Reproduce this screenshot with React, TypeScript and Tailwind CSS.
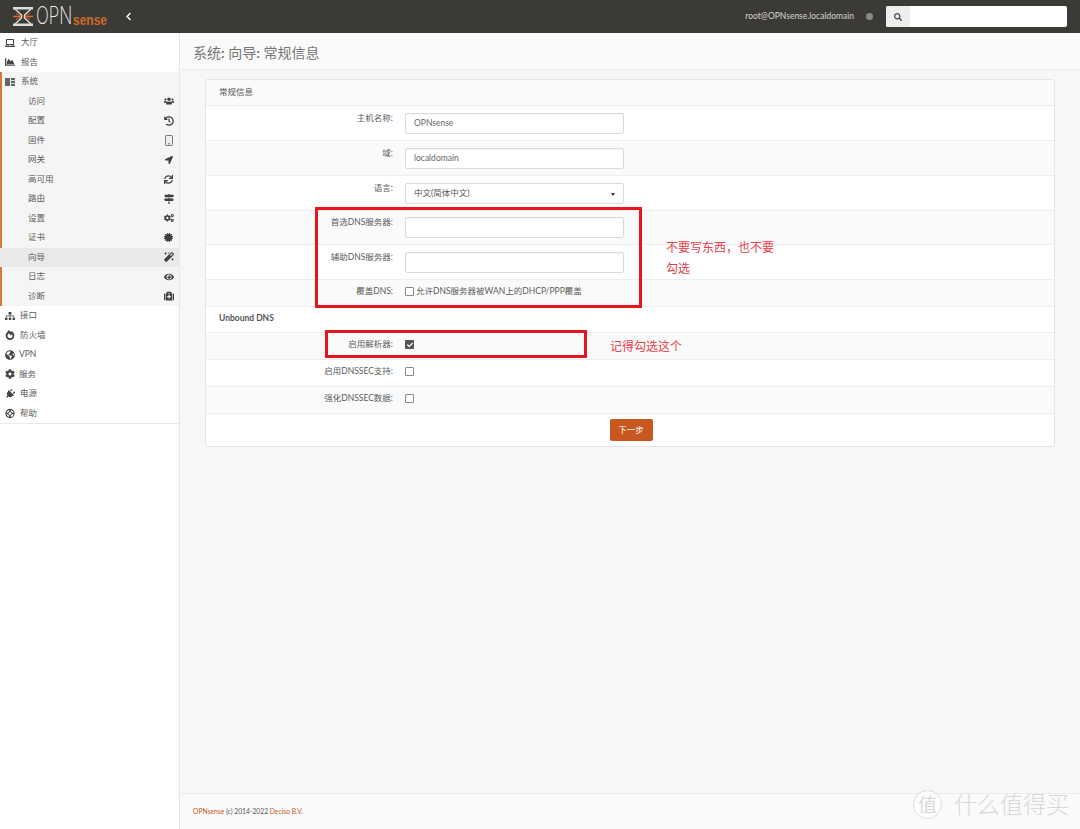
import React from "react";
import {
  FaLaptop, FaChartArea, FaUsers, FaHistory, FaLocationArrow, FaSync,
  FaMapSigns, FaCogs, FaCertificate, FaMagic, FaEye, FaMedkit, FaSitemap, FaFireAlt, FaGlobeAmericas,
  FaCog, FaPlug, FaSearch, FaChevronLeft, FaCheck,
} from "react-icons/fa";

const font = "font-['Lato','Noto_Sans_CJK_SC',sans-serif]";

function Logo() {
  return (
    <div className="flex items-center pl-[13px]">
      <svg width="20" height="19" viewBox="0 0 20 19" className="shrink-0">
        <g fill="none" stroke="#dcdcd8">
          <path d="M0 1.200h20M0 17.800h20" strokeWidth="2.400" />
          <path d="M2 2l6.500 6v3L2 17M18 2l-6.500 6v3L18 17" strokeWidth="1.400" />
        </g>
        <path d="M0 9.500h8M12 9.500h8" stroke="#e0682c" strokeWidth="1.600" />
        <path d="M3 6.500l5 2.500M17 6.500l-5 2.500M3 12.500l5-2.500M17 12.500l-5-2.500" stroke="#e0682c" strokeWidth="0.800" />
      </svg>
      <span className="ml-[3px] block w-[37px] origin-center scale-y-[1.45] text-[17px] leading-none font-extralight text-[#f0f0ec] font-['Inter',sans-serif]">OPN</span>
      <span className="block w-[34px] translate-y-[3px] scale-y-[1.2] text-[12px] leading-none font-bold text-[#cf6a2a] font-['Liberation_Sans',sans-serif]">sense</span>
    </div>
  );
}

function TabletIcon() {
  return (
    <svg width="8" height="11" viewBox="0 0 8 11">
      <rect x="0.500" y="0.500" width="7" height="10" rx="0.800" fill="#eeeeee" stroke="#777" />
      <circle cx="4" cy="8.800" r="0.700" fill="#444" />
    </svg>
  );
}

function ListIcon() {
  return (
    <svg width="10" height="8" viewBox="0 0 10 8" fill="#666">
      <rect x="0" y="0" width="5" height="8" />
      <rect x="6" y="0" width="4" height="2.200" />
      <rect x="6" y="3" width="4" height="2" />
      <rect x="6" y="5.800" width="4" height="2.200" />
    </svg>
  );
}

function RingIcon() {
  return (
    <svg width="11" height="11" viewBox="0 0 11 11" fill="none" stroke="#444">
      <circle cx="5.500" cy="5.500" r="4.500" strokeWidth="1.200" />
      <circle cx="5.500" cy="5.500" r="2" strokeWidth="1" />
      <path d="M5.500 1v2.500M5.500 7.500V10M1 5.500h2.500M7.500 5.500H10" strokeWidth="1.800" />
    </svg>
  );
}

function NavRow({ icon, label, sub, right, active, x }: { icon?: React.ReactNode; label: string; sub?: boolean; right?: React.ReactNode; active?: boolean; x?: string }) {
  return (
    <div className={`flex h-[19.5px] items-center text-[8.5px] text-[#5c5c5c] ${sub ? "pl-[28px] pr-[5px]" : "pl-[5px]"} ${active ? "bg-[#e9e9e9]" : ""}`}>
      {icon && <span className="flex w-[10px] justify-center text-[10px] text-[#444]">{icon}</span>}
      <span className={sub ? "" : x ?? "ml-[6px]"}>{label}</span>
      {right && <span className="ml-auto flex w-[11px] justify-center text-[10px] text-[#3f3f3f]">{right}</span>}
    </div>
  );
}

function Sidebar() {
  return (
    <aside className="flex w-[180px] shrink-0 flex-col border-r border-[#e6e6e6] bg-white">
      <div className="border-b border-[#e9e9e9]">
        <NavRow icon={<FaLaptop />} label="大厅" />
        <NavRow icon={<FaChartArea />} label="报告" />
        <div className="border-l-2 border-[#d9773b] bg-[#f5f5f5]">
          <div className="-ml-[2px]">
            <NavRow icon={<ListIcon />} label="系统" />
            <NavRow sub label="访问" right={<FaUsers />} />
            <NavRow sub label="配置" right={<FaHistory />} />
            <NavRow sub label="固件" right={<TabletIcon />} />
            <NavRow sub label="网关" right={<FaLocationArrow className="text-[8px]" />} />
            <NavRow sub label="高可用" right={<FaSync className="text-[9px]" />} />
            <NavRow sub label="路由" right={<FaMapSigns />} />
            <NavRow sub label="设置" right={<FaCogs />} />
            <NavRow sub label="证书" right={<FaCertificate className="text-[9px]" />} />
            <NavRow sub label="向导" right={<FaMagic />} active />
            <NavRow sub label="日志" right={<FaEye />} />
            <NavRow sub label="诊断" right={<FaMedkit />} />
          </div>
        </div>
        <NavRow icon={<FaSitemap />} label="接口" x="ml-[5px]" />
        <NavRow icon={<FaFireAlt />} label="防火墙" x="ml-[5px]" />
        <NavRow icon={<FaGlobeAmericas />} label="VPN" x="ml-[4px]" />
        <NavRow icon={<FaCog />} label="服务" x="ml-[4px]" />
        <NavRow icon={<FaPlug className="rotate-45" />} label="电源" x="ml-[5px]" />
        <NavRow icon={<RingIcon />} label="帮助" x="ml-[5px]" />
      </div>
    </aside>
  );
}

function Input({ value }: { value?: string }) {
  return (
    <div className="flex h-[21px] w-[219px] items-center rounded-[2px] border border-[#dcdcdc] bg-white pl-[8px] text-[8.5px] text-[#666] shadow-[inset_0_1px_1px_rgba(0,0,0,0.04)]">
      {value}
    </div>
  );
}

function Box({ checked }: { checked?: boolean }) {
  return checked ? (
    <span className="flex h-[9px] w-[9px] items-center justify-center rounded-[1px] bg-[#555] text-[6px] text-white"><FaCheck /></span>
  ) : (
    <span className="block h-[9px] w-[9px] rounded-[1px] border border-[#8a8a8a] bg-white" />
  );
}

function Row({ label, h, alt, up, children }: { label: string; h: string; alt?: boolean; up?: boolean; children: React.ReactNode }) {
  return (
    <div className={`flex items-center border-t border-[#eeeeee] ${h} ${alt ? "bg-[#fafafa]" : "bg-white"} ${up ? "" : "pb-[3px]"}`}>
      <div className={`w-[187px] text-right text-[8.5px] leading-none text-[#5c5c5c] ${up ? "-translate-y-[5px]" : ""}`}>{label}</div>
      <div className="ml-[12px] flex items-center">{children}</div>
    </div>
  );
}

export default function App() {
  return (
    <div className={`relative flex h-[829px] w-[1080px] flex-col overflow-hidden bg-[#f7f7f7] ${font}`}>
      <header className="flex h-[33px] shrink-0 items-center bg-[#3b3a37]">
        <Logo />
        <FaChevronLeft className="ml-[17px] text-[9px] text-white" />
        <span className="ml-auto text-[8.5px] text-[#d4d4d0]">root@OPNsense.localdomain</span>
        <span className="ml-[12px] h-[7px] w-[7px] rounded-full bg-[#8a8a86]" />
        <div className="ml-[13px] mr-[13px] flex h-[21px] w-[181px] overflow-hidden rounded-[2px] bg-white">
          <span className="flex w-[24px] items-center justify-center bg-[#eeeeee] text-[8px] text-[#444]"><FaSearch /></span>
        </div>
      </header>
      <div className="flex min-h-0 flex-1">
        <Sidebar />
        <main className="flex min-w-0 flex-1 flex-col">
          <div className="flex h-[37px] shrink-0 items-center border-b border-[#ececec] bg-[#fafafa] pl-[13px] text-[14px] text-[#777]">
            <span className="translate-y-[1px]">系统<b className="font-bold">:</b> 向导<b className="font-bold">:</b> 常规信息</span>
          </div>
          <section className="ml-[25px] mt-[9px] w-[850px] rounded-[2px] border border-[#e6e6e6] bg-white">
            <div className="flex h-[25px] items-center bg-[#fafafa] pl-[13px] text-[8.5px] text-[#555]">常规信息</div>
            <Row up label="主机名称:" h="h-[35px]"><Input value="OPNsense" /></Row>
            <Row up label="域:" h="h-[35px]" alt><Input value="localdomain" /></Row>
            <Row up label="语言:" h="h-[35px]">
              <div className="relative flex h-[21px] w-[219px] items-center rounded-[2px] border border-[#dcdcdc] bg-white pl-[8px] text-[8.5px] text-[#555]">
                中文(简体中文)
                <span className="absolute right-[8px] top-[9px] h-0 w-0 border-x-[2.500px] border-t-[3px] border-x-transparent border-t-[#333]" />
              </div>
            </Row>
            <Row up label="首选DNS服务器:" h="h-[34px]" alt><Input /></Row>
            <Row up label="辅助DNS服务器:" h="h-[35px]"><Input /></Row>
            <Row label="覆盖DNS:" h="h-[27px]" alt>
              <Box /><span className="ml-[2px] text-[8.5px] text-[#5c5c5c]">允许DNS服务器被WAN上的DHCP/PPP覆盖</span>
            </Row>
            <div className="flex h-[26px] items-center border-t border-[#eeeeee] pb-[2px] pl-[13px] text-[8.5px] font-bold text-[#555]">Unbound DNS</div>
            <Row label="启用解析器:" h="h-[27px]" alt><Box checked /></Row>
            <Row label="启用DNSSEC支持:" h="h-[27px]"><Box /></Row>
            <Row label="强化DNSSEC数据:" h="h-[27px]" alt><Box /></Row>
            <div className="flex h-[33px] items-center justify-center border-t border-[#eeeeee] pl-[2px]">
              <span className="flex h-[22px] w-[43px] items-center justify-center rounded-[2px] bg-[#c8581f] text-[8.5px] text-white">下一步</span>
            </div>
          </section>
          <footer className="mt-auto flex h-[36px] shrink-0 items-center border-t border-[#ececec] bg-[#fafafa] pl-[13px] text-[6.75px] text-[#555]">
            <span className="text-[#c8581f]">OPNsense</span>&nbsp;(c) 2014-2022&nbsp;<span className="text-[#c8581f]">Deciso B.V.</span>
          </footer>
        </main>
      </div>

      <div className="absolute left-[315px] top-[207px] h-[101px] w-[327px] border-[3px] border-[#e5161f]" />
      <div className="absolute left-[325px] top-[330px] h-[28px] w-[262px] border-[3px] border-[#e5161f]" />
      <div className="absolute left-[666px] top-[237px] w-[120px] text-[12px] leading-[21px] text-[#e8404a]">不要写东西，也不要<br />勾选</div>
      <div className="absolute left-[610px] top-[337px] text-[12px] leading-[20px] text-[#e8404a]">记得勾选这个</div>

      <div className="absolute left-[913px] top-[790px] flex items-center text-[#d8d8d8]">
        <span className="flex h-[29px] w-[29px] items-center justify-center rounded-full border border-[#dddddd] bg-white/70 text-[19px] leading-none">值</span>
        <span className="ml-[12px] text-[23px] leading-none font-light">什么值得买</span>
      </div>
    </div>
  );
}
